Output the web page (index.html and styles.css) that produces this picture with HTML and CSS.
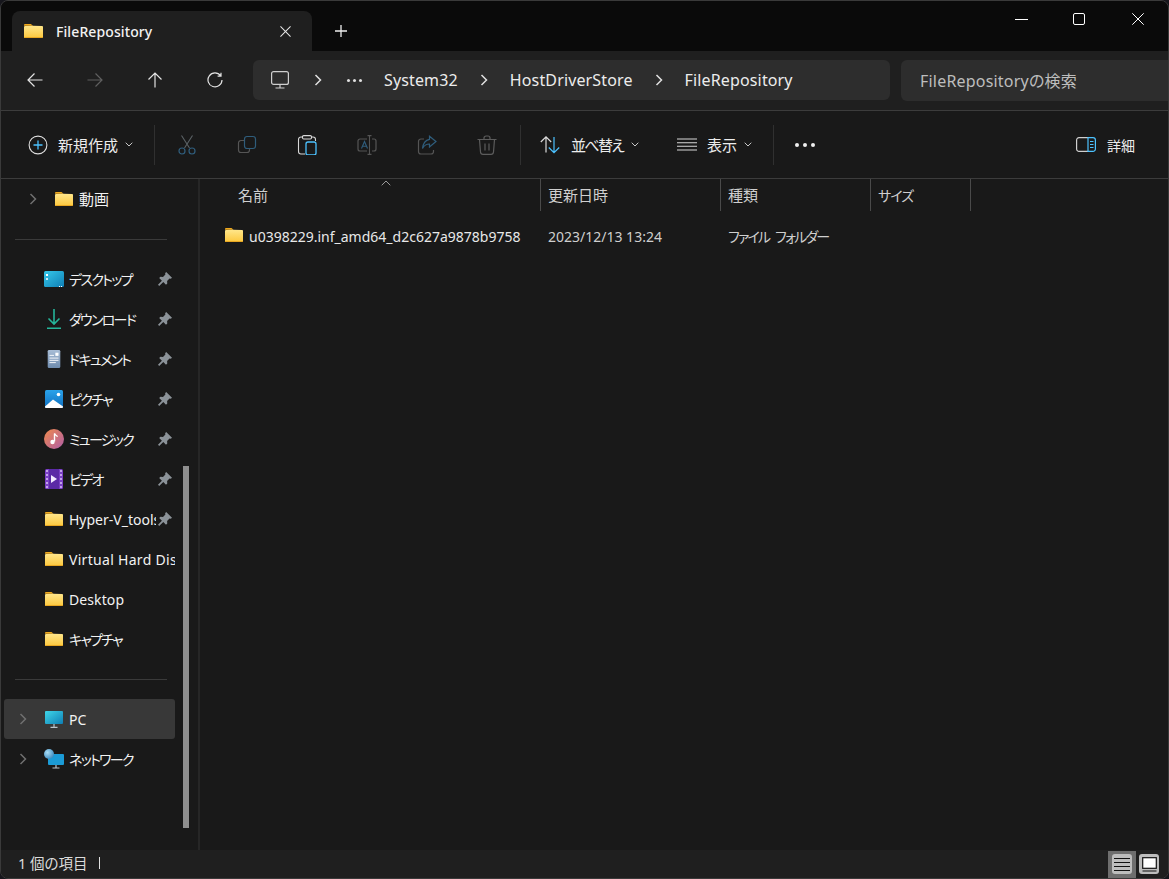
FILE: index.html
```html
<!DOCTYPE html>
<html lang="ja">
<head>
  <meta charset="UTF-8" />
  <title>FileRepository</title>
  <link rel="stylesheet" href="styles.css">
</head>
<body>
<svg class="defs" width="0" height="0">
  <defs>
    <linearGradient id="fg" x1="0" y1="0" x2="0" y2="1"><stop offset="0" stop-color="#ffe68a"/><stop offset="1" stop-color="#fcc83e"/></linearGradient>
    <symbol id="folder" viewBox="0 0 18 15" preserveAspectRatio="none">
      <path d="M0 1.200C0 .5.5 0 1.200 0h4.600c.4 0 .7.1 1 .4L8.600 2H0z" fill="#f0a91d"/>
      <path d="M0 3.200C0 2.600.5 2.100 1.200 2.100L8 2l9 .2c.5 0 1 .5 1 1v10.500c0 .7-.5 1.200-1.200 1.200H1.200C.5 15 0 14.500 0 13.800z" fill="url(#fg)"/>
      <path d="M0 14h18v.2c0 .4-.5.8-1.200.8H1.200C.5 15 0 14.600 0 14.200z" fill="#e8a722"/>
    </symbol>
    <symbol id="pin" viewBox="0 0 14 14">
      <path d="M8.200 0 14 5.800l-1.200 1-1.300-.3-2.400 2.400.2 2.500-1.300 1.300-2.700-2.700L1.200 14 0 12.800l3.900-4.100-2.700-2.700 1.300-1.300 2.500.2 2.400-2.400-.3-1.300z" fill="#8b9298"/>
    </symbol>
    <symbol id="chev" viewBox="0 0 8 12">
      <path d="M1.500 1 6.500 6l-5 5" fill="none" stroke="currentColor" stroke-width="1.500"/>
    </symbol>
    <symbol id="caret" viewBox="0 0 8 5">
      <path d="M.7.7 4 4 7.300.7" fill="none" stroke="currentColor" stroke-width="1"/>
    </symbol>
  </defs>
</svg>

<div class="window">
  <div class="titlebar">
    <div class="tab">
      <svg class="tab-folder"><use href="#folder"/></svg>
      <span class="tab-title">FileRepository</span>
      <svg class="tab-close" viewBox="0 0 12 12"><path d="M.5.5l11 11M11.500.5l-11 11" stroke="#e6e6e6" stroke-width="1.100"/></svg>
    </div>
    <svg class="tab-add" viewBox="0 0 12 12"><path d="M6 0v12M0 6h12" stroke="#f0f0f0" stroke-width="1.300"/></svg>
    <div class="winctl">
      <div class="winbtn btn-min"><svg width="13" height="1" viewBox="0 0 13 1"><path d="M0 .5h13" stroke="#fff"/></svg></div>
      <div class="winbtn"><svg width="12" height="12" viewBox="0 0 12 12"><rect x=".5" y=".5" width="11" height="11" rx="1.500" fill="none" stroke="#fff"/></svg></div>
      <div class="winbtn"><svg width="12" height="12" viewBox="0 0 12 12"><path d="M.3.3l11.400 11.400M11.700.3.3 11.700" stroke="#fff"/></svg></div>
    </div>
  </div>

  <div class="navbar">
    <div class="navbtn"><svg viewBox="0 0 16 16"><path d="M15.500 8H1M7.500 1.500 1 8l6.500 6.500" fill="none" stroke="#e2e2e2" stroke-width="1.200"/></svg></div>
    <div class="navbtn"><svg viewBox="0 0 16 16"><path d="M.5 8H15M8.500 1.500 15 8l-6.500 6.500" fill="none" stroke="#5f5f5f" stroke-width="1.200"/></svg></div>
    <div class="navbtn"><svg viewBox="0 0 16 16"><path d="M8 15.500V1M1.500 7.500 8 1l6.500 6.500" fill="none" stroke="#e2e2e2" stroke-width="1.200"/></svg></div>
    <div class="navbtn"><svg viewBox="0 0 16 16"><path d="M13.600 3.700A7 7 0 1 0 15 8M14 .8v3.400h-3.400" fill="none" stroke="#e2e2e2" stroke-width="1.200"/></svg></div>
    <div class="address">
      <svg class="addr-pc" viewBox="0 0 18 18"><rect x=".6" y=".6" width="16.800" height="12.800" rx="2" fill="none" stroke="#cfcfcf" stroke-width="1.200"/><path d="M9 14v2.500M4.500 17h9" stroke="#cfcfcf" stroke-width="1.200"/></svg>
      <svg class="crumb-chev first"><use href="#chev"/></svg>
      <div class="crumb-dots"><i></i><i></i><i></i></div>
      <span class="crumb first-name">System32</span>
      <svg class="crumb-chev"><use href="#chev"/></svg>
      <span class="crumb">HostDriverStore</span>
      <svg class="crumb-chev"><use href="#chev"/></svg>
      <span class="crumb">FileRepository</span>
    </div>
    <div class="search">FileRepositoryの検索</div>
  </div>

  <div class="toolbar">
    <div class="tool tool-new">
      <svg class="ico" viewBox="0 0 20 20"><circle cx="10" cy="10" r="8.900" fill="none" stroke="#dcdcdc" stroke-width="1.100"/><path d="M10 5.500v9M5.500 10h9" stroke="#4cc2ff" stroke-width="1.300"/></svg>
      <span>新規作成</span>
      <svg class="caret"><use href="#caret"/></svg>
    </div>
    <div class="sep"></div>
    <div class="iconbtn"><svg viewBox="0 0 20 20"><path d="M4.500 .5 12.500 13M15.500 .5 7.500 13" stroke="#5b6266" stroke-width="1.100" fill="none"/><circle cx="5" cy="16" r="3" fill="none" stroke="#2f5d7c" stroke-width="1.200"/><circle cx="15" cy="16" r="3" fill="none" stroke="#2f5d7c" stroke-width="1.200"/></svg></div>
    <div class="iconbtn"><svg viewBox="0 0 20 20"><rect x="7.500" y="1.500" width="11" height="12" rx="2.500" fill="none" stroke="#2f5d7c" stroke-width="1.200"/><path d="M7 5.500H4A2.500 2.500 0 0 0 1.500 8v7A2.500 2.500 0 0 0 4 17.500h6A2.500 2.500 0 0 0 12.500 15v-1" fill="none" stroke="#555" stroke-width="1.200"/></svg></div>
    <div class="iconbtn"><svg viewBox="0 0 20 20"><path d="M8 19H4a2.500 2.500 0 0 1-2.500-2.500v-12A2.500 2.500 0 0 1 4 2h1.500M14.500 2H16a2.500 2.500 0 0 1 2.500 2.500v1.500" fill="none" stroke="#d8d8d8" stroke-width="1.100"/><rect x="5.500" y=".6" width="9" height="3.400" rx="1.200" fill="none" stroke="#d8d8d8" stroke-width="1.100"/><rect x="9" y="7" width="10" height="13" rx="2" fill="none" stroke="#4cc2ff" stroke-width="1.300"/></svg></div>
    <div class="iconbtn"><svg viewBox="0 0 20 20"><path d="M10 4H3a2 2 0 0 0-2 2v8a2 2 0 0 0 2 2h7M15 4h2a2 2 0 0 1 2 2v8a2 2 0 0 1-2 2h-2" fill="none" stroke="#555" stroke-width="1.200"/><path d="M4.500 13.500 7.500 6.500l3 7M5.500 11.200h4" fill="none" stroke="#2f5d7c" stroke-width="1.100"/><path d="M12.500.6v18.800M10.500.6h4M10.500 19.400h4" fill="none" stroke="#555" stroke-width="1.100"/></svg></div>
    <div class="iconbtn"><svg viewBox="0 0 20 20"><path d="M7 4H4a2.500 2.500 0 0 0-2.500 2.500v10A2.500 2.500 0 0 0 4 19h10a2.500 2.500 0 0 0 2.500-2.500V15" fill="none" stroke="#555" stroke-width="1.200"/><path d="M12.500 1.200 19 6.500 12.500 12V9C9 9 7 10.500 5.500 13.500 6 8.500 8.500 5 12.500 4.300z" fill="none" stroke="#2f5d7c" stroke-width="1.200"/></svg></div>
    <div class="iconbtn"><svg viewBox="0 0 20 20"><path d="M.5 4.500h19M7 4.500V3a2 2 0 0 1 2-2h2a2 2 0 0 1 2 2v1.500M2.500 4.500 3.500 17A2.500 2.500 0 0 0 6 19.300h8A2.500 2.500 0 0 0 16.500 17l1-12.500M8 8.500v7M12 8.500v7" fill="none" stroke="#5c5c5c" stroke-width="1.200"/></svg></div>
    <div class="sep sep-sort"></div>
    <div class="tool tool-sort">
      <svg class="ico" viewBox="0 0 20 20"><path d="M6 17.500V2M.8 7 6 1.800 11.200 7" fill="none" stroke="#dcdcdc" stroke-width="1.200"/><path d="M14 2v15.500M8.800 12.500 14 17.700l5.200-5.200" fill="none" stroke="#4cc2ff" stroke-width="1.200"/></svg>
      <span>並べ替え</span>
      <svg class="caret"><use href="#caret"/></svg>
    </div>
    <div class="tool tool-view">
      <svg class="ico" viewBox="0 0 20 13"><path d="M0 1h20M0 4.700h20M0 8.300h20M0 12h20" stroke="#d8d8d8" stroke-width="1.100"/></svg>
      <span>表示</span>
      <svg class="caret"><use href="#caret"/></svg>
    </div>
    <div class="sep sep-more"></div>
    <div class="more"><i></i><i></i><i></i></div>
    <div class="tool tool-detail">
      <svg class="ico" viewBox="0 0 20 15"><path d="M12 .6H3A2.400 2.400 0 0 0 .6 3v9A2.400 2.400 0 0 0 3 14.400h9" fill="none" stroke="#cfcfcf" stroke-width="1.200"/><path d="M12 .6h5A2.400 2.400 0 0 1 19.400 3v9a2.400 2.400 0 0 1-2.400 2.400h-5z" fill="none" stroke="#4cc2ff" stroke-width="1.200"/><path d="M14 4.500h3.500M14 7.500h3.500M14 10.500h3.500" stroke="#4cc2ff" stroke-width="1.200"/></svg>
      <span>詳細</span>
    </div>
  </div>

  <div class="main">
    <aside class="sidebar">
      <div class="row row-lib">
        <svg class="row-chev"><use href="#chev"/></svg>
        <svg class="row-ico"><use href="#folder"/></svg>
        <span class="row-name ja">動画</span>
      </div>
      <div class="divider"></div>
      <div class="row">
        <svg class="row-ico ico-desk" viewBox="0 0 20 16"><defs><linearGradient id="dk" x1="0" y1="0" x2="1" y2="1"><stop offset="0" stop-color="#36c8ea"/><stop offset="1" stop-color="#0f7fb5"/></linearGradient></defs><rect width="20" height="16" rx="1.500" fill="url(#dk)"/><rect x="2" y="3" width="2" height="2" fill="#fff"/><rect x="2" y="7" width="2" height="2" fill="#cfeefa"/><rect x="15" y="15" width="1" height="1" fill="#fff"/><rect x="17" y="15" width="1" height="1" fill="#fff"/></svg>
        <span class="row-name kana">デスクトップ</span>
        <svg class="row-pin"><use href="#pin"/></svg>
      </div>
      <div class="row">
        <svg class="row-ico ico-tall" viewBox="0 0 18 20"><path d="M9 0v15M3.500 9.500 9 15l5.500-5.500" fill="none" stroke="#25b59a" stroke-width="1.600"/><path d="M2 19.200h14" stroke="#25b59a" stroke-width="1.600"/></svg>
        <span class="row-name kana">ダウンロード</span>
        <svg class="row-pin"><use href="#pin"/></svg>
      </div>
      <div class="row">
        <svg class="row-ico ico-tall" viewBox="0 0 20 20"><defs><linearGradient id="doc" x1="0" y1="0" x2="0" y2="1"><stop offset="0" stop-color="#a8bdd6"/><stop offset="1" stop-color="#6f8cae"/></linearGradient></defs><rect x="3" width="14" height="20" rx="1.500" fill="url(#doc)"/><path d="M5 6h5M5 9h10M5 11.500h10M5 14h7" stroke="#fff" stroke-width="1"/><rect x="11.500" y="3" width="3.500" height="3.500" fill="#fff"/></svg>
        <span class="row-name kana">ドキュメント</span>
        <svg class="row-pin"><use href="#pin"/></svg>
      </div>
      <div class="row">
        <svg class="row-ico ico-pic" viewBox="0 0 18 18"><defs><linearGradient id="pic" x1="0" y1="0" x2="0" y2="1"><stop offset="0" stop-color="#2aa3ea"/><stop offset="1" stop-color="#0f6fc0"/></linearGradient></defs><rect width="18" height="18" rx="1.500" fill="url(#pic)"/><path d="M0 16.500 8 9.500l10 7V17a1 1 0 0 1-1 1H1a1 1 0 0 1-1-1z" fill="#fff"/><circle cx="13.500" cy="4.500" r="1.800" fill="#fff"/></svg>
        <span class="row-name kana">ピクチャ</span>
        <svg class="row-pin"><use href="#pin"/></svg>
      </div>
      <div class="row">
        <svg class="row-ico ico-wide" viewBox="0 0 20 20"><defs><linearGradient id="mus" x1="0" y1="0" x2="1" y2="1"><stop offset="0" stop-color="#f08a4c"/><stop offset="1" stop-color="#b05ea8"/></linearGradient></defs><circle cx="10" cy="10" r="10" fill="url(#mus)"/><path d="M10.500 4.500v8" stroke="#fff" stroke-width="1.400"/><path d="M10.500 4.500c.5 1.800 2.500 2 3 3.200" stroke="#fff" stroke-width="1.300" fill="none"/><circle cx="8.500" cy="13" r="2.200" fill="#fff"/></svg>
        <span class="row-name kana">ミュージック</span>
        <svg class="row-pin"><use href="#pin"/></svg>
      </div>
      <div class="row">
        <svg class="row-ico ico-tall" viewBox="0 0 18 20"><rect width="18" height="20" rx="1.500" fill="#7a3fc4"/><rect x="4" width="10" height="20" fill="#5b2aa6"/><path d="M1 2h2M1 6h2M1 10h2M1 14h2M1 18h2M15 2h2M15 6h2M15 10h2M15 14h2M15 18h2" stroke="#d9c3f5" stroke-width="1.500"/><path d="M6 6v8l6-4z" fill="#f2eaff"/></svg>
        <span class="row-name kana">ビデオ</span>
        <svg class="row-pin"><use href="#pin"/></svg>
      </div>
      <div class="row">
        <svg class="row-ico"><use href="#folder"/></svg>
        <span class="row-name name-pinned">Hyper-V_tools</span>
        <svg class="row-pin"><use href="#pin"/></svg>
      </div>
      <div class="row">
        <svg class="row-ico"><use href="#folder"/></svg>
        <span class="row-name name-long">Virtual Hard Disks</span>
      </div>
      <div class="row">
        <svg class="row-ico"><use href="#folder"/></svg>
        <span class="row-name">Desktop</span>
      </div>
      <div class="row">
        <svg class="row-ico"><use href="#folder"/></svg>
        <span class="row-name kana">キャプチャ</span>
      </div>
      <div class="divider"></div>
      <div class="row row-top selected">
        <svg class="row-chev"><use href="#chev"/></svg>
        <svg class="row-ico ico-pc" viewBox="0 0 18 17"><defs><linearGradient id="pc" x1="0" y1="0" x2="1" y2="1"><stop offset="0" stop-color="#3fd6e8"/><stop offset="1" stop-color="#0f7fb5"/></linearGradient></defs><rect width="18" height="13" rx="1" fill="url(#pc)"/><path d="M9 13v3M5.500 16.400h7" stroke="#b9c4cc" stroke-width="1.200"/></svg>
        <span class="row-name">PC</span>
      </div>
      <div class="row row-top">
        <svg class="row-chev"><use href="#chev"/></svg>
        <svg class="row-ico ico-wide" viewBox="0 0 20 20"><defs><radialGradient id="glb" cx=".35" cy=".35" r=".8"><stop offset="0" stop-color="#a8dcf5"/><stop offset="1" stop-color="#2f80b8"/></radialGradient></defs><rect x="4" y="5" width="16" height="11" rx="1" fill="#1b9bd6"/><path d="M12 16v2.500M8.500 19h7" stroke="#b9c4cc" stroke-width="1.200"/><circle cx="5" cy="5" r="5" fill="url(#glb)"/></svg>
        <span class="row-name kana">ネットワーク</span>
      </div>
      <div class="scrollbar"></div>
    </aside>

    <section class="files">
      <div class="colhead">
        <div class="col col-name">名前</div>
        <div class="col col-date">更新日時</div>
        <div class="col col-type">種類</div>
        <div class="col col-size"><span class="size-label">サイズ</span></div>
        <svg class="sortmark" viewBox="0 0 10 6"><path d="M.7 5.300 5 1l4.300 4.300" fill="none" stroke="#9a9a9a" stroke-width="1"/></svg>
      </div>
      <div class="filerow">
        <div class="cell cell-name"><svg class="file-ico"><use href="#folder"/></svg>u0398229.inf_amd64_d2c627a9878b9758</div>
        <div class="cell cell-date">2023/12/13 13:24</div>
        <div class="cell cell-type">ファイル フォルダー</div>
      </div>
    </section>
  </div>

  <div class="statusbar">
    <span class="count">1 個の項目</span>
    <span class="status-sep"></span>
    <div class="viewsw">
      <div class="vbtn on"><div class="vface"><svg width="18" height="15" viewBox="0 0 18 15"><path d="M1 1.500h16M1 5.500h16M1 9.500h16M1 13.500h16" stroke="#111" stroke-width="1.200"/></svg></div></div>
      <div class="vbtn"><div class="vface"><svg width="15" height="15" viewBox="0 0 15 15"><rect x=".7" y=".7" width="13.600" height="10.600" fill="#fff" stroke="#111" stroke-width="1.200"/><path d="M.5 14h14" stroke="#111" stroke-width="1.200"/></svg></div></div>
    </div>
  </div>
</div>
</body>
</html>
```

FILE: styles.css
```css
* {box-sizing: border-box;}
html, body {height: 100%;}
body {margin: 0; background: #16161c; overflow: hidden; font-family: "Noto Sans", "Noto Sans CJK JP", sans-serif; font-feature-settings: "palt"; color: #f2f2f2;}
.defs {display: block;}
svg {display: block; flex: none;}

.window {height: 879px; width: 1169px; display: flex; flex-direction: column; background: #191919; border: 1px solid #3a3a3a; border-radius: 8px; overflow: hidden;}

/* title bar */
.titlebar {height: 50px; background: #0a0a0a; display: flex; align-items: flex-end; padding-left: 11px; flex: none;}
.tab {width: 300px; height: 40px; background: #1f1f1f; border-radius: 8px 8px 0 0; display: flex; align-items: center; padding-left: 12px;}
.tab-folder {width: 19px; height: 14px;}
.tab-title {margin-left: 13px; font-size: 14px; letter-spacing: .1px; font-weight: 500; flex: 1;}
.tab-close {width: 11px; height: 11px; margin-right: 21px;}
.tab-add {width: 12px; height: 12px; margin: 0 0 14px 23px;}
.winctl {margin-left: auto; align-self: flex-start; display: flex; height: 36px; padding-right: 1px;}
.winbtn {width: 59px; display: flex; align-items: center; justify-content: center;}
.btn-min {padding-left: 3px;}

/* nav row */
.navbar {height: 60px; background: #1f1f1f; border-bottom: 1px solid #3c3c3c; display: flex; align-items: center; padding-left: 4px; flex: none; padding-bottom: 1px;}
.navbtn {width: 60px; display: flex; justify-content: center; flex: none;}
.navbtn svg {width: 16px; height: 16px;}
.address {width: 637px; flex: none; height: 40px; margin-left: 8px; background: #2d2d2d; border-radius: 6px; display: flex; align-items: center; padding-left: 18px;}
.addr-pc {width: 18px; height: 18px;}
.crumb-chev {width: 8px; height: 12px; color: #e0e0e0; margin: 0 22px;}
.crumb-chev.first {margin: 0 0 0 25px;}
.crumb-dots {display: flex; gap: 3px; margin-left: 25px;}
.crumb-dots i {width: 3px; height: 3px; border-radius: 50%; background: #e0e0e0;}
.crumb {font-size: 16px; letter-spacing: .14px; color: #ececec; white-space: nowrap;}
.first-name {margin-left: 22px;}
.search {flex: 1; height: 41px; margin-left: 11px; background: #2d2d2d; border-radius: 6px 0 0 6px; display: flex; align-items: center; padding-left: 19px; font-size: 16px; letter-spacing: .2px; color: #bdbdbd;}

/* command bar */
.toolbar {height: 68px; background: #191919; border-bottom: 1px solid #3c3c3c; display: flex; align-items: center; flex: none; padding: 0 33px 0 27px; font-size: 15px; color: #ececec;}
.tool {display: flex; align-items: center;}
.ico {width: 20px; height: 20px;}
.caret {width: 8px; height: 5px; color: #c8c8c8;}
.tool-new span {margin-left: 10px;}
.tool-new .caret {margin-left: 7px;}
.sep {width: 1px; height: 40px; background: #303030; margin-left: 21px;}
.iconbtn {width: 60px; display: flex; justify-content: center;}
.iconbtn svg {width: 20px; height: 20px;}
.sep + .iconbtn {margin-left: 2px;}
.sep-sort {margin-left: 3px;}
.tool-sort {margin-left: 19px;}
.tool-sort span {margin-left: 11px; letter-spacing: -1.700px;}
.tool-sort .caret {margin-left: 8px;}
.tool-view {margin-left: 38px;}
.tool-view .ico {height: 13px;}
.tool-view span {margin-left: 10px;}
.tool-view .caret {margin-left: 7px;}
.sep-more {margin-left: 21px;}
.more {display: flex; gap: 4px; margin-left: 21px;}
.more i {width: 4px; height: 4px; border-radius: 50%; background: #f0f0f0;}
.tool-detail {margin-left: auto; font-size: 14px;}
.tool-detail .ico {height: 15px;}
.tool-detail span {margin-left: 11px;}

/* content */
.main {flex: 1; display: flex; min-height: 0;}
.sidebar {position: relative; width: 199px; flex: none; border-right: 2px solid #262626; padding: 0 0 0 3px; overflow: hidden;}
.row {position: relative; width: 171px; height: 40px; display: flex; align-items: center; padding-left: 41px; border-radius: 3px; font-size: 14px; overflow: hidden;}
.row-lib {padding-left: 25px;}
.row-top {padding-left: 15px;}
.selected {background: #383838;}
.row-chev {width: 8px; height: 12px; color: #6f6f6f; margin-right: 18px;}
.row-ico {width: 18px; height: 14px;}
.ico-tall {height: 20px;}
.ico-pic {height: 18px;}
.ico-pc {height: 17px;}
.ico-desk {width: 20px; height: 16px; margin: 0 -1px;}
.ico-wide {width: 20px; height: 20px; margin: 0 -1px;}
.row-name {margin-left: 6px; white-space: nowrap; letter-spacing: .1px;}
.row-name.ja {font-size: 15px; letter-spacing: 0; margin-bottom: 2px;}
.row-name.kana {letter-spacing: -1.700px; margin-bottom: 1px;}
.name-pinned {width: 87px; overflow: hidden; letter-spacing: 0;}
.name-long {letter-spacing: .3px;}
.row-pin {position: absolute; right: 3px; top: 13px; width: 14px; height: 14px;}
.divider {height: 40px; width: 152px; margin-left: 11px; position: relative;}
.divider::after {content: ""; position: absolute; left: 0; right: 0; top: 20px; height: 1px; background: #3a3a3a;}
.scrollbar {position: absolute; left: 182px; top: 287px; width: 6px; height: 362px; background: #8f8f8f;}

.files {flex: 1; min-width: 0;}
.colhead {position: relative; height: 33px; display: flex; font-size: 15px; color: #cfcfcf;}
.col {height: 32px; padding: 7px 0 0 7px; border-right: 1px solid #4a4a4a; line-height: 18px;}
.col-name {width: 341px; padding-left: 38px;}
.col-date {width: 180px;}
.col-type {width: 150px;}
.col-size {width: 100px;}
.size-label {font-size: 14px; letter-spacing: -1px;}
.sortmark {position: absolute; left: 181px; top: 1px; width: 10px; height: 6px;}
.filerow {display: flex; height: 40px; margin-top: 4px; align-items: center; font-size: 14px; color: #e8e8e8;}
.cell {white-space: nowrap;}
.cell-name {width: 341px; padding-left: 25px; display: flex; align-items: center;}
.file-ico {width: 18px; height: 14px; margin-right: 6px; margin-top: -2px;}
.cell-date {width: 180px; padding-left: 7px; color: #cfcfcf;}
.cell-type {padding-left: 7px; color: #cfcfcf; letter-spacing: -1.800px; word-spacing: 4px;}

/* status bar */
.statusbar {height: 28px; background: #1f1f1f; display: flex; align-items: center; padding-left: 17px; font-size: 14.5px; color: #dcdcdc; flex: none;}
.count {margin-top: -3px;}
.status-sep {width: 1px; height: 12px; background: #e0e0e0; margin: -2px 0 0 11px;}
.viewsw {margin-left: auto; display: flex; align-items: center; margin-right: 9px; gap: 3px;}
.vbtn {width: 28px; height: 27px; display: flex; align-items: center; justify-content: center;}
.vbtn.on {background: #6e6e6e;}
.vface {width: 20px; height: 20px; background: #bdbdbd; border-radius: 3px; display: flex; align-items: center; justify-content: center;}
.vbtn:last-child {width: 20px;}
```
